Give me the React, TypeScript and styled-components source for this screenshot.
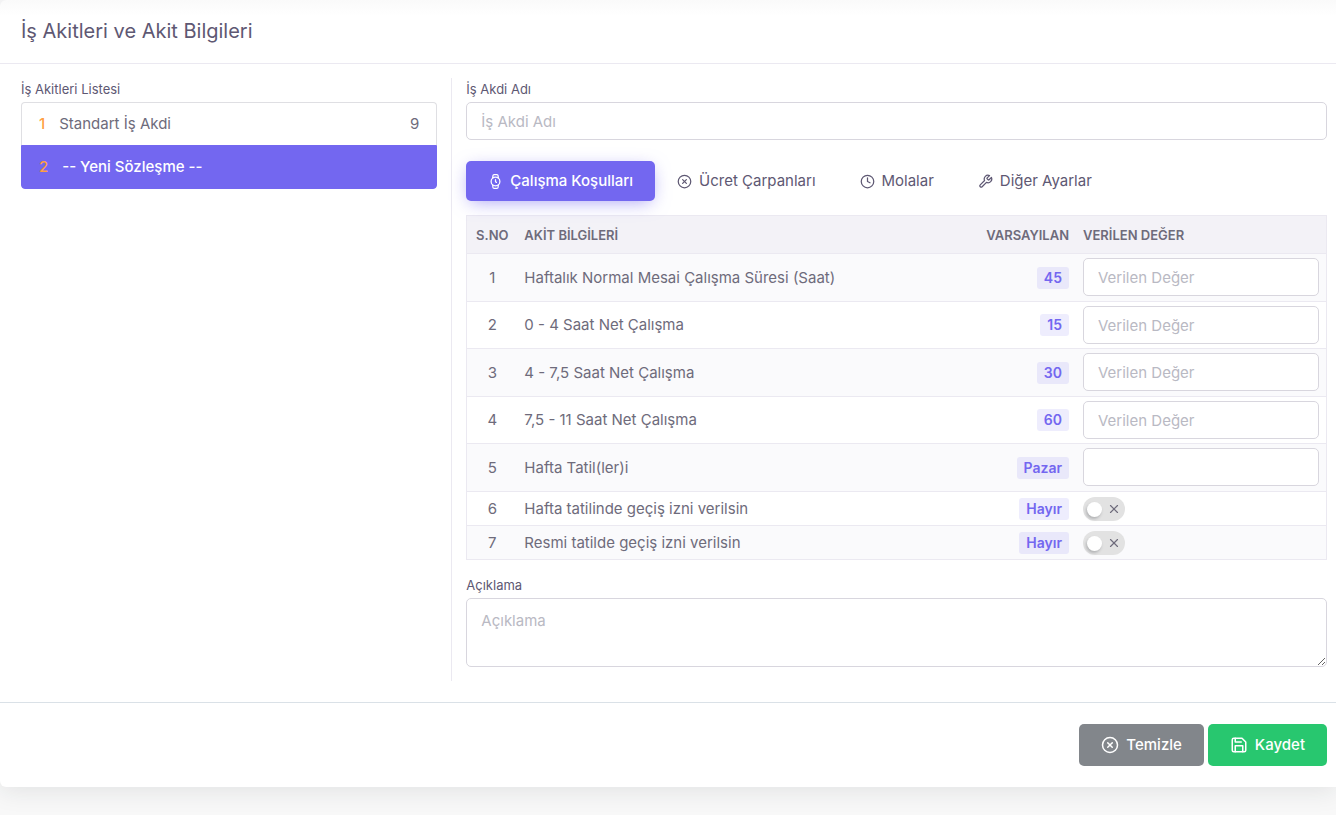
import React from "react";
import styled, { createGlobalStyle } from "styled-components";
import { FiWatch, FiXCircle, FiClock, FiTool, FiSave, FiX } from "react-icons/fi";

const GlobalStyle = createGlobalStyle`
  *, *::before, *::after { box-sizing: border-box; }
  body {
    margin: 0;
    background: #f8f8f8;
    color: #6e6b7b;
    font-family: Inter, "Noto Sans", sans-serif;
    font-size: 15px;
    line-height: 20px;
  }
  button, input, textarea { font: inherit; color: inherit; }
`;

const Page = styled.main`
  padding-bottom: 28px;
  overflow: hidden;
`;

const Card = styled.form`
  background: #fff linear-gradient(#fafafa, #fff) no-repeat 0 0 / 100% 16px;
  border-radius: 6px 0 0 6px;
  box-shadow: 0 4px 24px rgba(34, 41, 47, 0.1);
`;

const CardHeader = styled.header`
  padding: 18px 21px 19px;
  border-bottom: 1px solid #ebe9f1;
`;

const Title = styled.h1`
  margin: 0;
  color: #5e5873;
  font-size: 20px;
  font-weight: 400;
  line-height: 26px;
`;

const Columns = styled.div`
  display: grid;
  grid-template-columns: minmax(0, 1fr) minmax(0, 2fr);
  margin-right: -4px;
  padding: 14px 0 21px 7px;
`;

const ListColumn = styled.section`
  padding: 0 14px;
`;

const FormColumn = styled.section`
  padding: 0 13px 14px 14px;
  border-left: 1px solid #ebe9f1;
`;

const Label = styled.label`
  display: block;
  margin-bottom: 3px;
  padding-top: 1px;
  color: #5e5873;
  font-size: 13px;
  line-height: 20px;
`;

const ListLabel = styled(Label).attrs({ as: "div" })``;

const ContractList = styled.div`
  display: flex;
  flex-direction: column;
  border-radius: 4px;
`;

const ContractItem = styled.button<{ $active?: boolean }>`
  display: flex;
  gap: 14px;
  height: ${(p) => (p.$active ? "44px" : "43px")};
  align-items: center;
  padding: 0 17px;
  border: 1px solid ${(p) => (p.$active ? "#7367f0" : "#dfdfe3")};
  border-width: ${(p) => (p.$active ? "1px" : "1px 1px 0")};
  border-radius: ${(p) => (p.$active ? "0 0 4px 4px" : "4px 4px 0 0")};
  background: ${(p) => (p.$active ? "#7367f0" : "#fff")};
  color: ${(p) => (p.$active ? "#fff" : "#6e6b7b")};
  font-weight: ${(p) => (p.$active ? 500 : 400)};
  text-align: left;
`;

const ItemNumber = styled.span`
  color: #ff9f43;
  font-weight: 500;
`;

const ItemName = styled.span`
  flex: 1;
`;

const TextInput = styled.input`
  display: block;
  width: 100%;
  height: 38px;
  padding: 0 14px;
  border: 1px solid #d8d6de;
  border-radius: 5px;
  background: #fff;
  outline: none;
  &::placeholder { color: #b9b9c3; opacity: 1; }
`;

const TextArea = styled.textarea`
  display: block;
  width: 100%;
  height: 69px;
  padding: 12px 14px;
  border: 1px solid #d8d6de;
  border-radius: 5px;
  background: #fff;
  outline: none;
  resize: vertical;
  &::placeholder { color: #b9b9c3; opacity: 1; }
`;

const Tabs = styled.div`
  display: flex;
  margin: 21px 0 14px;
`;

const Tab = styled.button<{ $active?: boolean }>`
  display: flex;
  align-items: center;
  gap: 7px;
  height: 40px;
  padding: 0 22px;
  border: 0;
  border-radius: 5px;
  background: ${(p) => (p.$active ? "#7367f0" : "transparent")};
  box-shadow: ${(p) => (p.$active ? "0 4px 18px -4px rgba(115, 103, 240, 0.65)" : "none")};
  color: ${(p) => (p.$active ? "#fff" : "#5e5873")};
  font-weight: ${(p) => (p.$active ? 500 : 400)};
  white-space: nowrap;
`;

const Table = styled.table`
  width: 100%;
  margin-bottom: 14px;
  border: 1px solid #ebe9f1;
  border-bottom: 0;
  border-spacing: 0;
  table-layout: fixed;
`;

const NumberCol = styled.col`
  width: 50px;
`;

const DefaultCol = styled.col`
  width: 110px;
`;

const ValueCol = styled.col`
  width: 250px;
`;

type Align = "left" | "center" | "right";

const HeadCell = styled.th<{ $align?: Align }>`
  height: 38px;
  padding: 0 7px;
  border-bottom: 1px solid #ebe9f1;
  background: #f3f2f7;
  font-size: 13px;
  font-weight: 600;
  text-align: ${(p) => p.$align ?? "left"};
  white-space: nowrap;
`;

const Row = styled.tr`
  &:nth-child(odd) { background: #fafafc; }
`;

const Cell = styled.td<{ $align?: Align }>`
  padding: 0 7px;
  border-bottom: 1px solid #ebe9f1;
  text-align: ${(p) => p.$align ?? "left"};
`;

const InputCell = styled(Cell)`
  padding: 4px 7px;
  ${Row}:nth-child(odd) & { padding-bottom: 5px; }
`;

const SwitchCell = styled(Cell)`
  padding: 5px 7px 4px;
`;

const Badge = styled.span`
  display: inline-block;
  padding: 1px 7px;
  border-radius: 3px;
  background: rgba(115, 103, 240, 0.12);
  color: #7367f0;
  font-size: 14px;
  font-weight: 600;
  vertical-align: middle;
`;

const SwitchBox = styled.label`
  display: block;
  position: relative;
  width: 42px;
  height: 24px;
`;

const SwitchInput = styled.input`
  appearance: none;
  display: flex;
  align-items: center;
  width: 100%;
  height: 100%;
  margin: 0;
  padding: 0 4px;
  border-radius: 12px;
  background: #e2e2e2;
  &::before {
    content: "";
    width: 15px;
    height: 15px;
    border-radius: 50%;
    background: #fff;
    box-shadow: -1px 2px 3px rgba(34, 41, 47, 0.25);
  }
  &:checked { background: #7367f0; justify-content: flex-end; }
`;

const SwitchIcon = styled(FiX)`
  position: absolute;
  top: 5px;
  right: 4px;
  pointer-events: none;
`;

const Footer = styled.footer`
  display: flex;
  justify-content: flex-end;
  gap: 4px;
  padding: 21px 9px 21px 21px;
  border-top: 1px solid #dae1e7;
`;

const ActionButton = styled.button<{ $color: string }>`
  display: flex;
  align-items: center;
  gap: 7px;
  height: 42px;
  padding: 0 22px;
  border: 0;
  border-radius: 5px;
  background: ${(p) => p.$color};
  color: #fff;
  font-weight: 500;
`;

const tabs = [
  { name: "Çalışma Koşulları", Icon: FiWatch },
  { name: "Ücret Çarpanları", Icon: FiXCircle },
  { name: "Molalar", Icon: FiClock },
  { name: "Diğer Ayarlar", Icon: FiTool },
];

const terms = [
  { name: "Haftalık Normal Mesai Çalışma Süresi (Saat)", value: "45", kind: "text" },
  { name: "0 - 4 Saat Net Çalışma", value: "15", kind: "text" },
  { name: "4 - 7,5 Saat Net Çalışma", value: "30", kind: "text" },
  { name: "7,5 - 11 Saat Net Çalışma", value: "60", kind: "text" },
  { name: "Hafta Tatil(ler)i", value: "Pazar", kind: "days" },
  { name: "Hafta tatilinde geçiş izni verilsin", value: "Hayır", kind: "switch" },
  { name: "Resmi tatilde geçiş izni verilsin", value: "Hayır", kind: "switch" },
];

export default function App() {
  return (
    <Page lang="tr">
      <GlobalStyle />
      <Card onSubmit={(e: React.FormEvent) => e.preventDefault()}>
        <CardHeader>
          <Title>İş Akitleri ve Akit Bilgileri</Title>
        </CardHeader>
        <Columns>
          <ListColumn>
            <ListLabel>İş Akitleri Listesi</ListLabel>
            <ContractList>
              <ContractItem type="button">
                <ItemNumber>1</ItemNumber>
                <ItemName>Standart İş Akdi</ItemName>
                <span>9</span>
              </ContractItem>
              <ContractItem type="button" $active>
                <ItemNumber>2</ItemNumber>
                <ItemName>-- Yeni Sözleşme --</ItemName>
              </ContractItem>
            </ContractList>
          </ListColumn>
          <FormColumn>
            <Label htmlFor="contract-name">İş Akdi Adı</Label>
            <TextInput id="contract-name" placeholder="İş Akdi Adı" />
            <Tabs role="tablist">
              {tabs.map(({ name, Icon }, i) => (
                <Tab key={name} type="button" role="tab" aria-selected={i === 0} $active={i === 0}>
                  <Icon size={15} />
                  {name}
                </Tab>
              ))}
            </Tabs>
            <Table>
              <colgroup>
                <NumberCol />
                <col />
                <DefaultCol />
                <ValueCol />
              </colgroup>
              <thead>
                <tr>
                  <HeadCell $align="center">S.NO</HeadCell>
                  <HeadCell>AKİT BİLGİLERİ</HeadCell>
                  <HeadCell $align="right">VARSAYILAN</HeadCell>
                  <HeadCell>VERİLEN DEĞER</HeadCell>
                </tr>
              </thead>
              <tbody>
                {terms.map((term, i) => (
                  <Row key={term.name}>
                    <Cell $align="center">{i + 1}</Cell>
                    <Cell>{term.name}</Cell>
                    <Cell $align="right">
                      <Badge>{term.value}</Badge>
                    </Cell>
                    {term.kind === "switch" ? (
                      <SwitchCell>
                        <SwitchBox>
                          <SwitchInput type="checkbox" role="switch" aria-label={term.name} />
                          <SwitchIcon size={14} />
                        </SwitchBox>
                      </SwitchCell>
                    ) : (
                      <InputCell>
                        <TextInput
                          aria-label={term.name}
                          placeholder={term.kind === "text" ? "Verilen Değer" : undefined}
                        />
                      </InputCell>
                    )}
                  </Row>
                ))}
              </tbody>
            </Table>
            <Label htmlFor="description">Açıklama</Label>
            <TextArea id="description" placeholder="Açıklama" />
          </FormColumn>
        </Columns>
        <Footer>
          <ActionButton type="reset" $color="#82868b">
            <FiXCircle size={18} />
            Temizle
          </ActionButton>
          <ActionButton type="submit" $color="#28c76f">
            <FiSave size={18} />
            Kaydet
          </ActionButton>
        </Footer>
      </Card>
    </Page>
  );
}
